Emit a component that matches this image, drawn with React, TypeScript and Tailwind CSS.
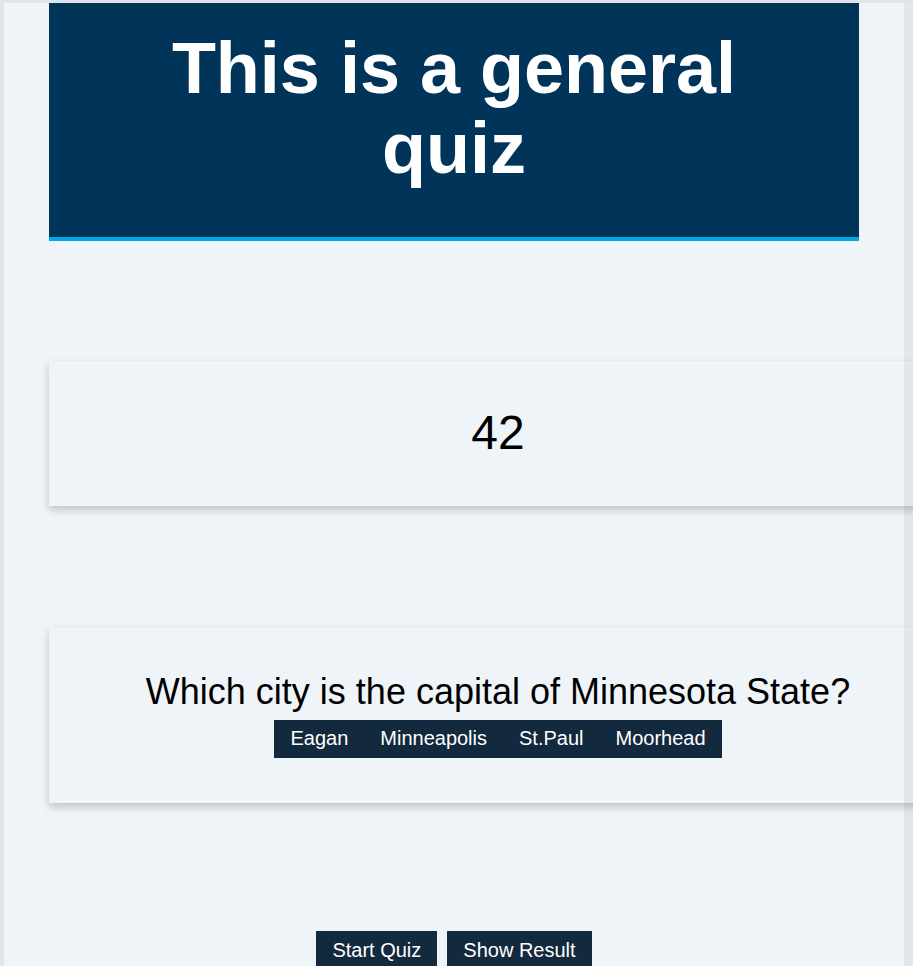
import React from "react";

export default function App() {
  const answers = ["Eagan", "Minneapolis", "St.Paul", "Moorhead"];
  return (
    <div
      className="relative w-[913px] h-[966px] overflow-hidden bg-[#eff4f8] text-black"
      style={{ fontFamily: '"Liberation Sans", Arial, sans-serif' }}
    >
      <div className="pl-[49px] pt-[3px] w-[859px]">
        <header className="w-[810px] bg-[#003459] border-b-4 border-[#00a8e8] pt-[25px] pb-[48px]">
          <h1 className="text-center text-white font-bold text-[72px] leading-[80.4px] px-[60px]">
            This is a general quiz
          </h1>
        </header>

        <div className="mt-[120px] w-[898px] h-[145px] box-border pt-[45px] bg-[#eff4f8] shadow-[0_4px_8px_0_rgba(0,0,0,0.2)] text-center">
          <div className="text-[48px] leading-[54px]">42</div>
        </div>

        <div className="mt-[121px] w-[898px] h-[176px] box-border pt-[45px] bg-[#eff4f8] shadow-[0_4px_8px_0_rgba(0,0,0,0.2)] flex flex-col items-center">
          <h2 className="text-[36px] leading-[40px] whitespace-nowrap">
            Which city is the capital of Minnesota State?
          </h2>
          <div className="mt-[8px] flex bg-[#13293d]">
            {answers.map((a) => (
              <button
                key={a}
                className="h-[38px] px-4 text-white text-[20px] leading-[23px] bg-[#13293d]"
              >
                {a}
              </button>
            ))}
          </div>
        </div>

        <div className="mt-[128px] w-[810px] flex justify-center gap-[10px]">
          <button className="h-[40px] px-4 bg-[#13293d] text-white text-[20px] leading-[23px]">
            Start Quiz
          </button>
          <button className="h-[40px] px-4 bg-[#13293d] text-white text-[20px] leading-[23px]">
            Show Result
          </button>
        </div>
      </div>

      <div className="pointer-events-none absolute left-0 top-0 w-full h-[3px] bg-black/[0.06]" />
      <div className="pointer-events-none absolute left-0 top-[3px] bottom-0 w-[4px] bg-black/[0.06]" />
      <div className="pointer-events-none absolute right-0 top-[3px] bottom-0 w-[9px] bg-black/[0.05]" />
    </div>
  );
}
